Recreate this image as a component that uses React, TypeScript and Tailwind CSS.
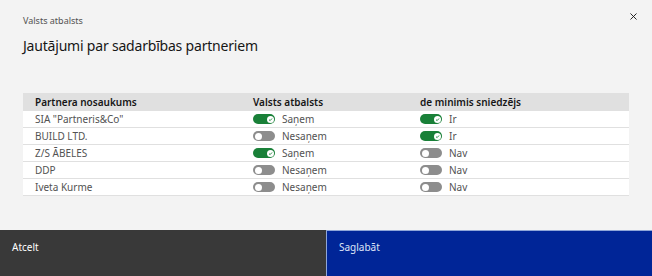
import { X } from "lucide-react";

type Row = { name: string; aid: boolean; minimis: boolean };

const rows: Row[] = [
  { name: 'SIA "Partneris&Co"', aid: true, minimis: true },
  { name: "BUILD LTD.", aid: false, minimis: true },
  { name: "Z/S ĀBELES", aid: true, minimis: false },
  { name: "DDP", aid: false, minimis: false },
  { name: "Iveta Kurme", aid: false, minimis: false },
];

function Toggle({ on, label }: { on: boolean; label: string }) {
  return (
    <div className="flex items-center gap-[7px]">
      <span
        className={`flex h-[10px] w-[22px] items-center rounded-full px-[1.5px] ${
          on ? "justify-end bg-[#198038]" : "justify-start bg-[#8d8d8d]"
        }`}
      >
        <span className="flex h-[7px] w-[7px] items-center justify-center rounded-full bg-white">
          {on && (
            <svg width="5" height="5" viewBox="0 0 10 10">
              <path d="M2 5.2 L4.2 7.3 L8 3" fill="none" stroke="#198038" strokeWidth="1.8" />
            </svg>
          )}
        </span>
      </span>
      <span>{label}</span>
    </div>
  );
}

export default function App() {
  return (
    <div className="flex h-[276px] w-[652px] flex-col bg-[#f3f3f3] font-['Noto_Sans',sans-serif]">
      <div className="relative px-[23px] pt-[15px]">
        <p className="text-[9px] leading-[12px] text-[#525252]">Valsts atbalsts</p>
        <h2 className="mt-[9px] text-[14px] leading-[20px] tracking-[-0.2px] text-[#161616]">
          Jautājumi par sadarbības partneriem
        </h2>
        <button className="absolute right-[12px] top-[9px] flex h-[14px] w-[14px] items-center justify-center text-[#161616]">
          <X size={11} strokeWidth={2} />
        </button>
      </div>

      <div className="mx-[23px] mt-[37px] text-[10px]">
        <div className="grid h-[18px] grid-cols-[230px_167px_1fr] items-center bg-[#e0e0e0] font-semibold text-[#161616]">
          <span className="pl-[12px]">Partnera nosaukums</span>
          <span>Valsts atbalsts</span>
          <span>de minimis sniedzējs</span>
        </div>
        {rows.map((r) => (
          <div
            key={r.name}
            className="grid h-[17px] grid-cols-[230px_167px_1fr] items-center border-b border-[#e0e0e0] bg-white text-[#525252]"
          >
            <span className="pl-[12px]">{r.name}</span>
            <Toggle on={r.aid} label={r.aid ? "Saņem" : "Nesaņem"} />
            <Toggle on={r.minimis} label={r.minimis ? "Ir" : "Nav"} />
          </div>
        ))}
      </div>

      <div className="flex-1" />

      <div className="flex h-[46px] text-[10px] text-white">
        <button className="flex w-[326px] items-start bg-[#393939] pl-[12px] pt-[11px] leading-[12px]">
          Atcelt
        </button>
        <button className="flex flex-1 items-start border-l border-t border-[#8fa6d8] bg-[#002597] pl-[12px] pt-[10px] leading-[12px] text-[#dfe6f7]">
          Saglabāt
        </button>
      </div>
    </div>
  );
}
